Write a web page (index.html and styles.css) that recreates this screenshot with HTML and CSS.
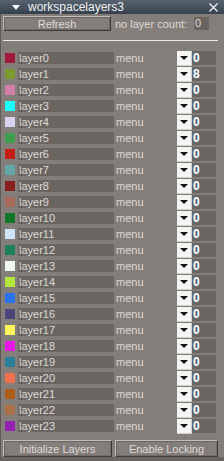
FILE: index.html
```html
<!DOCTYPE html>
<html lang="en">
<head>
    <meta charset="UTF-8">
    <meta name="viewport" content="width=device-width, initial-scale=1.0">
    <title>workspacelayers3</title>
    <link rel="stylesheet" href="styles.css">
</head>
<body>
    <div class="window">
        <div class="titlebar">
            <span class="collapse"></span>
            <span class="title">workspacelayers3</span>
            <svg class="close" width="9" height="9" viewBox="0 0 9 9">
                <path d="M0.5 0.5 L8.5 8.5 M8.5 0.5 L0.5 8.5" stroke="#f2f4f6" stroke-width="1.2" fill="none"/>
            </svg>
        </div>
        <div class="panel">
            <div class="top-row">
                <button class="btn refresh">Refresh</button>
                <span class="count-label">no layer count:</span>
                <span class="count-field">0</span>
            </div>
            <div class="separator"></div>
            <div class="layers" id="layers"></div>
            <div class="bottom-row">
                <button class="btn">Initialize Layers</button>
                <button class="btn">Enable Locking</button>
            </div>
        </div>
    </div>

    <script>
        // Layer colours, in order
        const colors = [
            '#a0183a', '#7b9a2f', '#d07fa8', '#1cffff', '#d6d2ee', '#3e9e4e',
            '#c41e16', '#63a7a7', '#86201a', '#a66a5a', '#117726', '#d2e2f6',
            '#1f7e5c', '#eef6ee', '#b2e63a', '#2a72ee', '#4a467a', '#fbf55a',
            '#e81ae8', '#2b8098', '#ee7050', '#ad5e1a', '#a9704a', '#9222b0'
        ];

        const layersDiv = document.getElementById('layers');
        colors.forEach((color, index) => {
            const row = document.createElement('div');
            row.className = 'layer-row';
            row.innerHTML = `
                <span class="swatch" style="background-color: ${color}"></span>
                <span class="name-field">layer${index}</span>
                <span class="menu-label">menu</span>
                <span class="drop-btn"><span class="arrow"></span></span>
                <span class="num-field">${index === 1 ? 8 : 0}</span>
            `;
            layersDiv.appendChild(row);
        });
    </script>
</body>
</html>
```

FILE: styles.css
```css
body {
    margin: 0;
    padding: 0;
    font-family: "Liberation Sans", Arial, sans-serif;
    font-size: 11px;
    background-color: #847e7b;
}
.window {
    width: 224px;
    height: 461px;
    display: flex;
    flex-direction: column;
    overflow: hidden;
}
.titlebar {
    height: 14px;
    display: flex;
    align-items: center;
    background: linear-gradient(#56636f, #36414d);
    color: #eef1f4;
    font-size: 12px;
}
.collapse {
    width: 0;
    height: 0;
    margin-left: 12px;
    margin-right: 8px;
    border-left: 4px solid transparent;
    border-right: 4px solid transparent;
    border-top: 5px solid #f4f6f8;
}
.title {
    flex: 1;
}
.close {
    margin-right: 6px;
}
.panel {
    flex: 1;
    display: flex;
    flex-direction: column;
    background-color: #847e7b;
    border-left: 1px solid #5e5856;
    border-bottom: 4px solid #6a6462;
}
.btn {
    font-family: "Liberation Sans", Arial, sans-serif;
    font-size: 11px;
    color: #dedad6;
    background-color: #847e7b;
    border: 1px solid;
    border-color: #c4beba #3e3a38 #3e3a38 #c4beba;
    box-shadow: inset 1px 1px 0 #6a6462, inset -1px -1px 0 #706a68;
    padding: 0;
}
.top-row {
    display: flex;
    align-items: center;
    height: 15px;
    margin-top: 2px;
    padding-left: 2px;
}
.refresh {
    width: 108px;
    height: 15px;
}
.count-label {
    color: #dedad6;
    margin-left: 4px;
    width: 79px;
}
.count-field {
    width: 14px;
    height: 13px;
    line-height: 13px;
    background-color: #6b6562;
    color: #dedad6;
    padding-left: 1px;
}
.separator {
    height: 1px;
    margin: 9px 6px 9px 2px;
    background-color: #ece8e4;
}
.layers {
    display: flex;
    flex-direction: column;
}
.layer-row {
    display: flex;
    align-items: center;
    height: 16px;
}
.swatch {
    width: 10px;
    height: 10px;
    margin-left: 4px;
    margin-right: 3px;
}
.name-field {
    width: 95px;
    height: 12px;
    line-height: 12px;
    padding-left: 1px;
    background-color: #6b6562;
    color: #dedad6;
}
.menu-label {
    width: 61px;
    margin-left: 2px;
    color: #dedad6;
}
.drop-btn {
    width: 14px;
    height: 14px;
    display: flex;
    align-items: center;
    justify-content: center;
    background-color: #f4f4f2;
    border-right: 1px solid #cfcfcc;
    border-bottom: 1px solid #cfcfcc;
}
.arrow {
    width: 0;
    height: 0;
    border-left: 4px solid transparent;
    border-right: 4px solid transparent;
    border-top: 4px solid #111;
}
.num-field {
    width: 23px;
    height: 14px;
    line-height: 14px;
    padding-left: 1px;
    background-color: #6b6562;
    color: #ffffff;
    font-weight: bold;
    font-size: 12px;
    text-shadow: 0 0 1px #3a6ab0;
}
.bottom-row {
    display: flex;
    gap: 3px;
    margin-top: 6px;
    padding-left: 2px;
}
.bottom-row .btn {
    width: 109px;
    height: 17px;
}
.bottom-row .btn + .btn {
    width: 103px;
}
```
